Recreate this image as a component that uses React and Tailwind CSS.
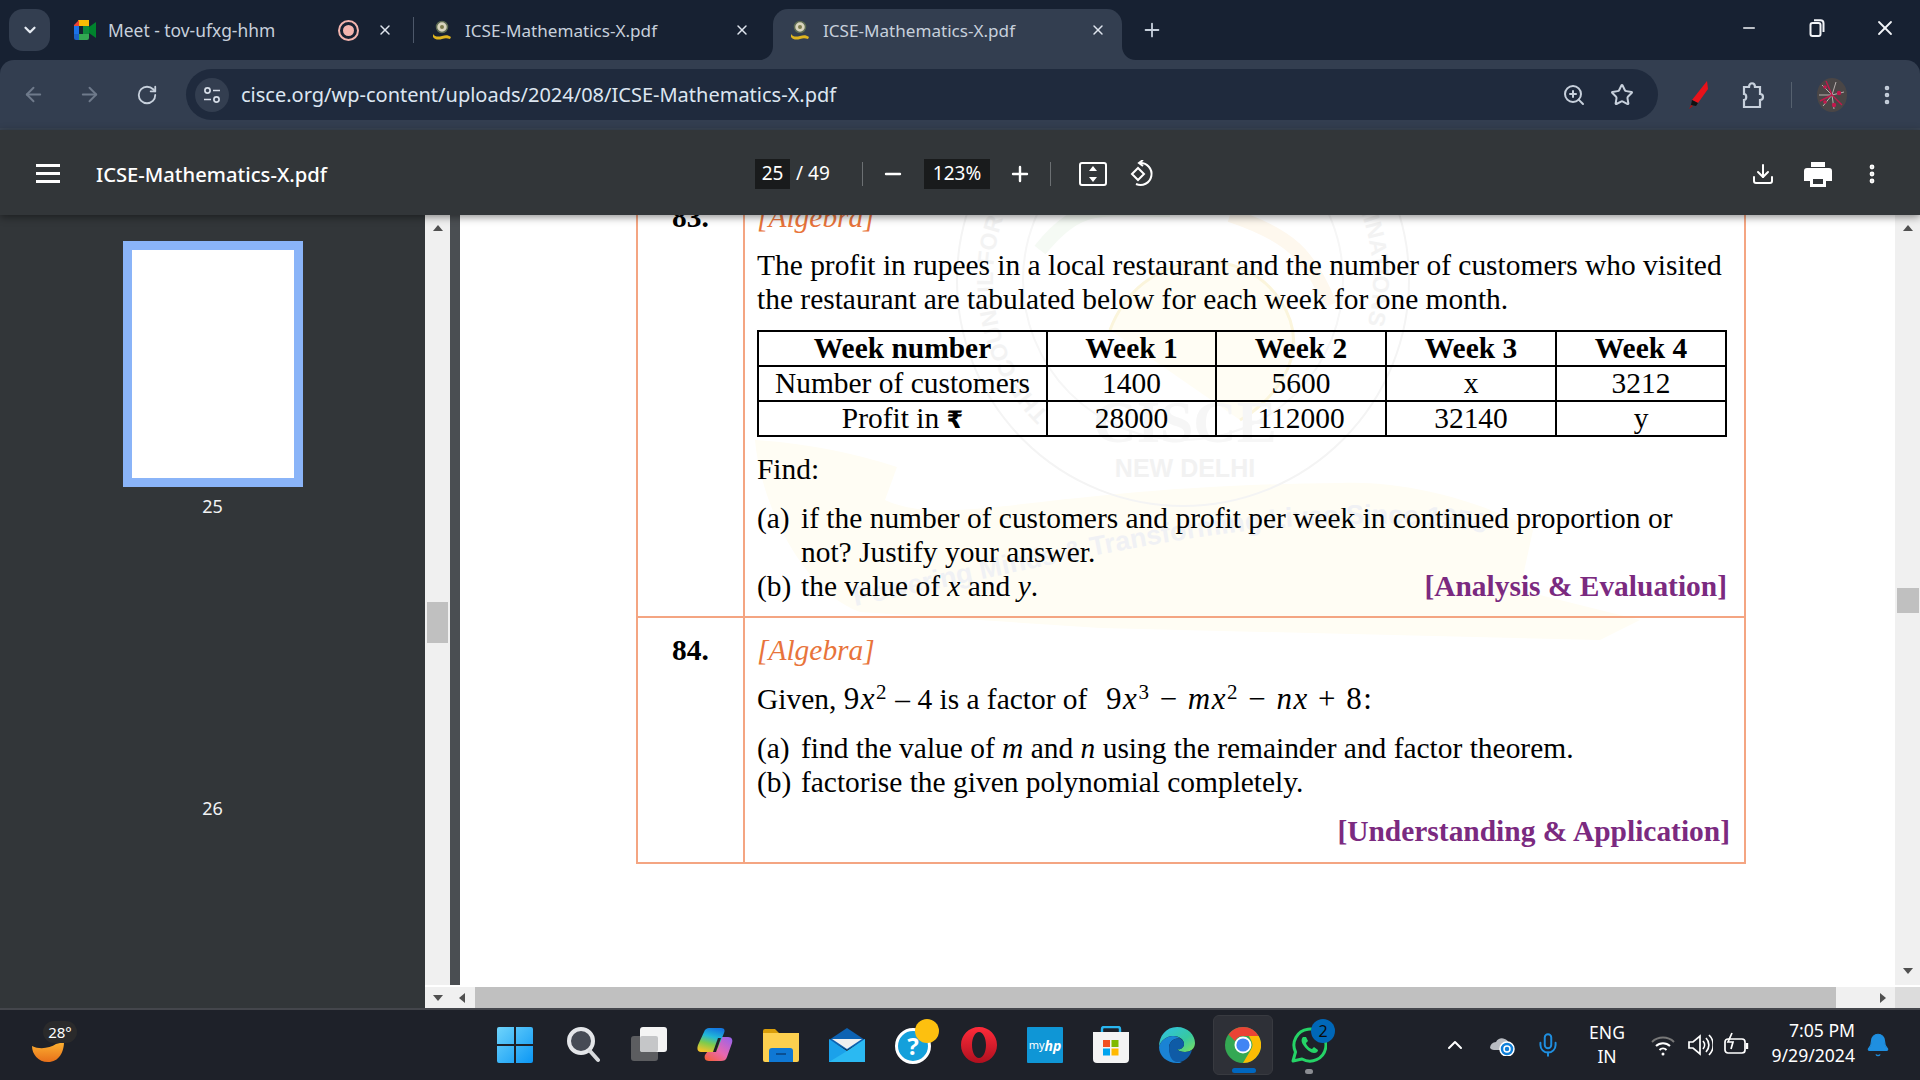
import React from "react";
import { ArrowLeft, ArrowRight, RotateCw, ZoomIn, Star, X, Plus, Minus, ChevronDown, ChevronUp, MoreVertical, Download, Mic, Bell } from "lucide-react";

const ui = "font-['Noto_Sans',sans-serif]";
const serif = "font-['Liberation_Serif',serif]";

function CisceIcon() {
  return (
    <svg width="22" height="22" viewBox="0 0 22 22" className="shrink-0">
      <circle cx="11" cy="8" r="5.5" fill="#d9d4bd" stroke="#5c6a52" strokeWidth="1.5" />
      <circle cx="11" cy="8" r="2" fill="#7b7a4c" />
      <path d="M2 15c2 3 5 3 9 2s6-1 9 1l-1 2c-3-1-5-1-8 0s-7 1-9-2z" fill="#e0b41e" />
    </svg>
  );
}

function MeetIcon() {
  return (
    <svg width="24" height="22" viewBox="0 0 24 22" className="shrink-0">
      <path d="M5 1h11v6H6v0z" fill="#fbbc04" />
      <path d="M1 6l5-5v6H1z" fill="#ea4335" />
      <path d="M1 7h5v8H1z" fill="#1a73e8" />
      <path d="M1 15h5v6H3a2 2 0 01-2-2z" fill="#1a63c8" />
      <path d="M6 15h10v4a2 2 0 01-2 2H6z" fill="#34a853" />
      <path d="M10 7h6v8h-6z" fill="#0f8a3c" />
      <path d="M16 8l7-5v16l-7-5z" fill="#00832d" />
    </svg>
  );
}

function Tab({ className, icon, title, extra, titleClass }) {
  return (
    <div className={`h-full flex items-center shrink-0 ${className}`}>
      {icon}
      <span className={`text-[#c7d0dc] whitespace-nowrap mt-[1px] ${titleClass || "ml-[12px] text-[17.1px]"} ${ui}`}>{title}</span>
      <div className="ml-auto flex items-center">
        {extra}
        <X size={16} strokeWidth={2.2} className="text-[#dfe5ee]" />
      </div>
    </div>
  );
}

function TabStrip() {
  return (
    <div className="h-[60px] shrink-0 bg-[#172132] flex pt-[9px] relative">
      <div className="ml-[9px] mr-[10px] w-[41px] h-[42px] rounded-[14px] bg-[#333e50] flex items-center justify-center">
        <ChevronDown size={18} strokeWidth={3} className="text-[#e6ebf2]" />
      </div>
      <Tab
        className="w-[353px] pl-[13px] pr-[20px] pb-[9px] h-[51px]"
        icon={<MeetIcon />}
        title="Meet - tov-ufxg-hhm"
        titleClass="ml-[11px] text-[17.4px]"
        extra={
          <span className="mr-[18px] w-[21px] h-[21px] rounded-full border-2 border-[#f3b4ae] flex items-center justify-center">
            <span className="w-[11px] h-[11px] rounded-full bg-[#f3b4ae]" />
          </span>
        }
      />
      <div className="w-px h-[26px] mt-[8px] bg-[#4d586a]" />
      <Tab
        className="w-[359px] pl-[17px] pr-[23px] pb-[9px]"
        icon={<CisceIcon />}
        title="ICSE-Mathematics-X.pdf"
      />
      <div className="relative w-[349px] h-[51px] shrink-0 bg-[#333e50] rounded-t-[15px] pb-[9px] pl-[16px] pr-[16px]">
        <Tab className="w-full" icon={<CisceIcon />} title="ICSE-Mathematics-X.pdf" />
        <svg width="14" height="14" viewBox="0 0 14 14" className="absolute bottom-0 -left-[14px]">
          <path d="M14 0v14H0C8 14 14 8 14 0z" fill="#333e50" />
        </svg>
        <svg width="14" height="14" viewBox="0 0 14 14" className="absolute bottom-0 -right-[14px]">
          <path d="M0 0v14h14C6 14 0 8 0 0z" fill="#333e50" />
        </svg>
      </div>
      <div className="ml-[19px] h-[42px] flex items-center">
        <Plus size={22} strokeWidth={2} className="text-[#c7d0dc]" />
      </div>
      <div className="ml-auto flex h-[42px] -mt-[2px] pr-[1px] text-[#f2f4f8]">
        <div className="w-[68px] flex items-center justify-center">
          <Minus size={18} strokeWidth={2} />
        </div>
        <div className="w-[68px] flex items-center justify-center">
          <svg width="16" height="18" viewBox="0 0 16 18" fill="none" stroke="currentColor" strokeWidth="2">
            <rect x="1.5" y="4" width="10" height="13" rx="2" />
            <path d="M5 1.2h6.5a3 3 0 013 3V13" />
          </svg>
        </div>
        <div className="w-[68px] flex items-center justify-center">
          <X size={24} strokeWidth={1.8} />
        </div>
      </div>
    </div>
  );
}

function ToolBar() {
  return (
    <div className="h-[70px] shrink-0 bg-[#172132]">
      <div className="h-full bg-[#333e50] rounded-t-[14px] border-b-2 border-[#3a4554] flex items-start pt-[9px]">
        <div className="w-[186px] h-[51px] shrink-0 flex items-center">
          <ArrowLeft size={23} strokeWidth={2} className="ml-[22px] text-[#6f7a8b]" />
          <ArrowRight size={23} strokeWidth={2} className="ml-[33px] text-[#6f7a8b]" />
          <RotateCw size={22} strokeWidth={2} className="ml-[35px] text-[#c7d0dc]" />
        </div>
        <div className="w-[1472px] h-[51px] shrink-0 rounded-full bg-[#1f2a3d] flex items-center pl-[9px] pr-[24px]">
          <div className="w-[34px] h-[34px] rounded-full bg-[#333e50] flex items-center justify-center">
            <svg width="20" height="20" viewBox="0 0 20 20" fill="none" stroke="#d5dce6" strokeWidth="1.7">
              <circle cx="5.5" cy="5.5" r="2.6" />
              <path d="M11 5.5h7M2 14.5h7" />
              <circle cx="14.5" cy="14.5" r="2.6" />
            </svg>
          </div>
          <span className={`ml-[12px] text-[#dde6f1] text-[20px] whitespace-nowrap ${ui}`}>cisce.org/wp-content/uploads/2024/08/ICSE-Mathematics-X.pdf</span>
          <div className="ml-auto flex items-center gap-[24px] text-[#c7d0dc]">
            <ZoomIn size={24} strokeWidth={2} />
            <Star size={24} strokeWidth={2} />
          </div>
        </div>
        <div className="flex items-center h-[51px]">
          <svg width="20" height="28" viewBox="0 0 20 28" className="ml-[30px]">
            <path d="M19 0l1 8-10 14-6-3z" fill="#e8121a" />
            <path d="M4 19l6 3-2 3-5-1z" fill="#111" />
            <path d="M3 24l2 1-4 3z" fill="#a11" />
          </svg>
          <svg width="24" height="28" viewBox="0 0 24 28" fill="none" stroke="#c7d0dc" strokeWidth="2.2" className="ml-[33px]">
            <path d="M3 6h5c0-5 6-5 6 0h5v7c4 0 4 6 0 6v7H3v-7c3 0 3-6 0-6z" />
          </svg>
          <div className="ml-[26px] w-px h-[26px] bg-[#56616f]" />
          <svg width="30" height="34" viewBox="0 0 30 34" className="ml-[25px]">
            <ellipse cx="15" cy="17" rx="15" ry="17" fill="#4a4646" />
            <path d="M15 17L5 7M15 17L2 17M15 17L6 28M15 17l12-3M15 17l2 14M15 17l4-13" stroke="#b8b0ae" strokeWidth="1" />
            <path d="M15 17L9 3M15 17L3 23M15 17l10 10" stroke="#c2184c" strokeWidth="1.4" />
            <circle cx="8" cy="9" r="1.8" fill="#c2184c" />
            <circle cx="22" cy="15" r="2.2" fill="#c2184c" />
            <circle cx="17" cy="27" r="2.2" fill="#c2184c" />
            <circle cx="8" cy="24" r="1.8" fill="#c2184c" />
          </svg>
          <MoreVertical size={24} strokeWidth={2.6} className="ml-[28px] text-[#c7d0dc]" />
        </div>
      </div>
    </div>
  );
}

function PdfToolBar() {
  return (
    <div className={`relative z-20 h-[85px] shrink-0 bg-[#323639] flex items-center pt-[2px] text-white shadow-[0_2px_8px_rgba(0,0,0,0.45)] ${ui}`}>
      <svg width="24" height="19" viewBox="0 0 24 19" fill="white" className="ml-[36px] shrink-0">
        <rect y="0" width="24" height="3" />
        <rect y="8" width="24" height="3" />
        <rect y="16" width="24" height="3" />
      </svg>
      <span className="ml-[36px] mt-[1px] w-[659px] text-[20.2px] font-medium whitespace-nowrap">ICSE-Mathematics-X.pdf</span>
      <span className="w-[35px] h-[30px] bg-[#191b1c] flex items-center justify-center text-[19px]">25</span>
      <span className="ml-[6px] w-[40px] text-[19px] whitespace-nowrap">/ 49</span>
      <div className="ml-[26px] w-px h-[24px] bg-[#6c7073]" />
      <Minus size={24} strokeWidth={2.4} className="ml-[18px]" />
      <span className="ml-[19px] w-[66px] h-[30px] bg-[#191b1c] flex items-center justify-center text-[19px]">123%</span>
      <Plus size={24} strokeWidth={2.4} className="ml-[18px]" />
      <div className="ml-[18px] w-px h-[24px] bg-[#6c7073]" />
      <svg width="28" height="24" viewBox="0 0 28 24" fill="none" stroke="white" strokeWidth="2" className="ml-[28px]">
        <rect x="1" y="1" width="26" height="22" rx="2" />
        <path d="M14 4l4 5h-8zM14 20l4-5h-8z" fill="white" stroke="none" />
      </svg>
      <svg width="28" height="28" viewBox="0 0 28 28" fill="none" stroke="white" strokeWidth="2" className="ml-[19px]">
        <path d="M9 14l6-6 6 6-6 6z" transform="translate(-3 0)" />
        <path d="M14 3a11 11 0 11-4 21" />
        <path d="M17 0l-4 3 4 3" />
      </svg>
      <div className="ml-auto flex items-center pr-[36px]">
        <Download size={24} strokeWidth={2} />
        <svg width="28" height="26" viewBox="0 0 28 26" className="ml-[29px]">
          <path d="M7 1h14v5H7z" fill="white" />
          <path d="M3 7h22a3 3 0 013 3v10h-6v-5H6v5H0V10a3 3 0 013-3z" fill="white" />
          <path d="M6 15h16v11H6z" fill="white" />
          <path d="M9 18h10v5H9z" fill="#323639" />
        </svg>
        <MoreVertical size={24} strokeWidth={2.8} className="ml-[28px]" />
      </div>
    </div>
  );
}

function Triangle({ dir, className }) {
  const d = { up: "M1 8l5-6 5 6z", down: "M1 3l5 6 5-6z", left: "M8 1L2 6l6 5z", right: "M4 1l6 5-6 5z" }[dir];
  return (
    <svg width="12" height="12" viewBox="0 0 12 12" className={className}>
      <path d={d} fill="#505050" />
    </svg>
  );
}

function Sidebar() {
  return (
    <div className={`w-[425px] shrink-0 bg-[#323639] flex flex-col items-center text-[#f1f3f4] text-[18px] ${ui}`}>
      <div className="mt-[26px] w-[180px] h-[246px] shrink-0 border-[9px] border-[#8ab4f8] bg-white" />
      <span className="mt-[7px] leading-[24px]">25</span>
      <span className="mt-[278px] leading-[24px]">26</span>
    </div>
  );
}

function Watermark() {
  return (
    <svg viewBox="460 215 1435 770" width="1435" height="770" className="absolute inset-0 pointer-events-none">
      <defs>
        <path id="wmRim" d="M1049 414a190 190 0 11268 0" />
        <path id="wmBand" d="M855 606C1050 566 1200 526 1350 524S1500 540 1540 562" />
      </defs>
      <path d="M755 440Q830 445 897 467L885 500C950 530 1050 485 1341 483 1420 480 1500 510 1533 530L1520 590 1640 620 1600 640 1100 628 860 612C800 590 760 500 755 440z" fill="#fffdf4" />
      <circle cx="1183" cy="280" r="226" fill="none" stroke="#f4f4f4" strokeWidth="2" />
      <circle cx="1183" cy="280" r="160" fill="none" stroke="#f6f6f6" strokeWidth="2" />
      <path d="M1040 250c40-50 60-40 130-40" fill="none" stroke="#f5faf4" strokeWidth="14" />
      <path d="M1230 215c60 20 80 40 100 90" fill="none" stroke="#fef8ee" strokeWidth="14" />
      <path d="M1110 330c30-80 130-90 170-30s-20 110-40 120" fill="#fffdf4" stroke="#fbf5dc" strokeWidth="3" />
      <text fontFamily="Liberation Sans" fontWeight="700" fontSize="23" fill="#f3f3f3">
        <textPath href="#wmRim">THE COUNCIL FOR THE INDIAN SCHOOL CERTIFICATE EXAMINATIONS</textPath>
      </text>
      <text x="1185" y="442" textAnchor="middle" fontFamily="Liberation Serif" fontWeight="700" fontSize="60" fill="#f6f6f6">CISCE</text>
      <text x="1185" y="477" textAnchor="middle" fontFamily="Liberation Sans" fontWeight="700" fontSize="25" fill="#f2f2f2">NEW DELHI</text>
      <text fontFamily="Liberation Sans" fontWeight="700" fontSize="27" fill="#f0f1f4">
        <textPath href="#wmBand">Powering Minds &amp; Transforming Lives Since 1958</textPath>
      </text>
    </svg>
  );
}

function Row83() {
  return (
    <div className="flex h-[443px] border-b-2 border-[#f4a582]">
      <div className="w-[107px] shrink-0 border-r-2 border-[#f4a582] text-center font-bold pt-[25px]">83.</div>
      <div className="flex-1 pl-[12px] pr-[33px] pt-[25px]">
        <p className="italic text-[#e8743b]">[Algebra]</p>
        <p className="mt-[14px] whitespace-nowrap">
          The profit in rupees in a local restaurant and the number of customers who visited<br />
          the restaurant are tabulated below for each week for one month.
        </p>
        <table className="mt-[14px] w-[968px] table-fixed border-collapse border-2 border-black text-center leading-[31px]">
          <colgroup>
            <col className="w-[289px]" />
            <col className="w-[169px]" />
            <col className="w-[170px]" />
            <col className="w-[170px]" />
            <col className="w-[170px]" />
          </colgroup>
          <tbody>
            <tr className="font-bold h-[35px]">
              {["Week number", "Week 1", "Week 2", "Week 3", "Week 4"].map((c) => (
                <td key={c} className="border-2 border-black p-0">{c}</td>
              ))}
            </tr>
            <tr className="h-[35px]">
              {["Number of customers", "1400", "5600", "x", "3212"].map((c) => (
                <td key={c} className="border-2 border-black p-0">{c}</td>
              ))}
            </tr>
            <tr className="h-[35px]">
              <td className="border-2 border-black p-0">Profit in <b className="font-['DejaVu_Sans',serif] text-[24px] leading-none">₹</b></td>
              {["28000", "112000", "32140", "y"].map((c) => (
                <td key={c} className="border-2 border-black p-0">{c}</td>
              ))}
            </tr>
          </tbody>
        </table>
        <p className="mt-[15px]">Find:</p>
        <div className="mt-[15px] flex">
          <span className="w-[44px] shrink-0">(a)</span>
          <p className="whitespace-nowrap">
            if the number of customers and profit per week in continued proportion or<br />
            not? Justify your answer.
          </p>
        </div>
        <div className="flex">
          <span className="w-[44px] shrink-0">(b)</span>
          <p>the value of <i>x</i> and <i>y</i>.</p>
          <b className="ml-auto text-[#7b2a80]">[Analysis &amp; Evaluation]</b>
        </div>
      </div>
    </div>
  );
}

function Row84() {
  const sup = "text-[21px] leading-none";
  return (
    <div className="flex h-[246px] border-b-2 border-[#f4a582]">
      <div className="w-[107px] shrink-0 border-r-2 border-[#f4a582] text-center font-bold pt-[15px]">84.</div>
      <div className="flex-1 pl-[12px] pr-[14px] pt-[15px]">
        <p className="italic text-[#e8743b]">[Algebra]</p>
        <p className="mt-[15px] whitespace-nowrap">
          Given, <span className="text-[31px] tracking-[1.5px]">9<i>x</i><sup className={sup}>2</sup></span> – 4 is a factor of&nbsp;{" "}
          <span className="ml-[4px] text-[31px] tracking-[1.5px]">
            9<i>x</i><sup className={sup}>3</sup> − <i>mx</i><sup className={sup}>2</sup> − <i>nx</i> + 8:
          </span>
        </p>
        <div className="mt-[15px] flex">
          <span className="w-[44px] shrink-0">(a)</span>
          <p>find the value of <i>m</i> and <i>n</i> using the remainder and factor theorem.</p>
        </div>
        <div className="flex">
          <span className="w-[44px] shrink-0">(b)</span>
          <p>factorise the given polynomial completely.</p>
        </div>
        <p className="mt-[15px] text-right font-bold text-[#7b2a80]">[Understanding &amp; Application]</p>
      </div>
    </div>
  );
}

function Viewer() {
  return (
    <div className="flex-1 flex flex-col min-w-0">
      <div className="flex-1 flex min-h-0">
        <div className="w-[25px] shrink-0 bg-[#f0f0f0] flex flex-col items-center pt-[8px]">
          <Triangle dir="up" />
          <div className="w-[21px] h-[41px] bg-[#c0c0c0] mt-[367px]" />
        </div>
        <div className="w-[10px] shrink-0 bg-[#4a4e52]" />
        <div className="flex-1 bg-white relative overflow-hidden">
          <Watermark />
          <div className={`relative ml-[176px] w-[1110px] -mt-[40px] border-l-2 border-r-2 border-[#f4a582] text-black text-[29.45px] leading-[34px] ${serif}`}>
            <Row83 />
            <Row84 />
          </div>
        </div>
        <div className="w-[25px] shrink-0 bg-[#f0f0f0] flex flex-col items-center pt-[8px]">
          <Triangle dir="up" />
          <div className="w-[22px] h-[25px] bg-[#c0c0c0] mt-[353px]" />
          <Triangle dir="down" className="mt-auto mb-[8px]" />
        </div>
      </div>
      <div className="h-[23px] shrink-0 border-t-2 border-white bg-[#f0f0f0] flex items-center">
        <div className="w-[25px] flex justify-center"><Triangle dir="down" /></div>
        <div className="w-[25px] flex justify-center"><Triangle dir="left" /></div>
        <div className="w-[1361px] h-full bg-[#c0c0c0]" />
        <div className="ml-[40px] w-[12px]"><Triangle dir="right" /></div>
        <div className="ml-auto w-[25px] h-full bg-[#dcdcdc]" />
      </div>
    </div>
  );
}

function WinIcon() {
  return (
    <svg width="36" height="36" viewBox="0 0 36 36" className="mr-[4px]">
      <defs>
        <linearGradient id="win" x1="0" y1="0" x2="1" y2="1">
          <stop offset="0" stopColor="#6fd4fb" />
          <stop offset="1" stopColor="#0b97f5" />
        </linearGradient>
      </defs>
      <path d="M0 2a2 2 0 012-2h15v17H0zM19 0h15a2 2 0 012 2v15H19zM0 19h17v17H2a2 2 0 01-2-2zM19 19h17v15a2 2 0 01-2 2H19z" fill="url(#win)" />
    </svg>
  );
}

function SearchIcon() {
  return (
    <svg width="34" height="36" viewBox="0 0 34 36">
      <circle cx="15" cy="14" r="12" fill="#464b55" stroke="#e4e6e9" strokeWidth="4" />
      <path d="M24 24l8 9" stroke="#d8dadd" strokeWidth="4" strokeLinecap="round" />
    </svg>
  );
}

function TaskViewIcon() {
  return (
    <svg width="36" height="36" viewBox="0 0 36 36">
      <rect x="0" y="9" width="27" height="25" rx="3" fill="#5c5d60" />
      <rect x="9" y="0" width="27" height="25" rx="3" fill="#f4f4f4" />
      <rect x="9" y="9" width="18" height="16" rx="2" fill="#c5c6c8" />
    </svg>
  );
}

function CopilotIcon() {
  return (
    <svg width="36" height="34" viewBox="0 0 36 34">
      <defs>
        <linearGradient id="cp1" x1="0.6" y1="0" x2="0.3" y2="1">
          <stop offset="0" stopColor="#1478e0" />
          <stop offset="0.35" stopColor="#22b8d8" />
          <stop offset="0.65" stopColor="#7ecb4c" />
          <stop offset="1" stopColor="#f5c22b" />
        </linearGradient>
        <linearGradient id="cp2" x1="0.9" y1="0" x2="0.1" y2="1">
          <stop offset="0" stopColor="#9a63ea" />
          <stop offset="0.55" stopColor="#e868b0" />
          <stop offset="1" stopColor="#f5603a" />
        </linearGradient>
      </defs>
      <path d="M21 9h10c4 0 5 3 4 6l-5 14c-1 3-3 4-6 4H12c-4 0-5-3-4-6z" fill="url(#cp2)" />
      <path d="M12 0h12c4 0 4 3 3 5l-6 15c-1 3-3 4-6 4H4c-4 0-4-4-3-7L7 4c1-3 3-4 5-4z" fill="url(#cp1)" />
      <path d="M21 10l-5 14 3 0 5-14z" fill="#1e2129" />
    </svg>
  );
}

function FolderIcon() {
  return (
    <svg width="36" height="33" viewBox="0 0 36 33">
      <path d="M0 2a2 2 0 012-2h10l4 4h-16z" fill="#d99e0a" />
      <path d="M0 4h36v27a2 2 0 01-2 2H2a2 2 0 01-2-2z" fill="#fdd04f" />
      <path d="M6 33v-11a3 3 0 013-3h18a3 3 0 013 3v11z" fill="#0f78d4" />
      <path d="M13 25h10" stroke="#0a4f93" strokeWidth="2" />
    </svg>
  );
}

function MailIcon() {
  return (
    <svg width="36" height="34" viewBox="0 0 36 34">
      <path d="M0 12L18 0l18 12-18 10z" fill="#0c62b3" />
      <path d="M3 11h30l-15 10z" fill="#efefef" />
      <path d="M0 11l18 12 18-12v23H0z" fill="#1ba1ea" />
      <path d="M0 34l18-11 18-12v23z" fill="#32c3f5" opacity="0.7" />
    </svg>
  );
}

function HelpIcon() {
  return (
    <div className="relative w-[36px] h-[36px]">
      <div className={`absolute left-0 top-[1px] w-[36px] h-[36px] rounded-full bg-[#14a0db] border-[3px] border-white flex items-center justify-center text-white font-bold text-[24px] leading-none ${ui}`}>?</div>
      <div className="absolute -top-[8px] left-[20px] w-[24px] h-[24px] rounded-full bg-[#fdc00f]" />
    </div>
  );
}

function OperaIcon() {
  return (
    <svg width="36" height="36" viewBox="0 0 36 36">
      <defs>
        <linearGradient id="op" x1="0" y1="0" x2="0" y2="1">
          <stop offset="0" stopColor="#ff2b3a" />
          <stop offset="1" stopColor="#b0101f" />
        </linearGradient>
      </defs>
      <path fillRule="evenodd" d="M18 0c10 0 18 8 18 18s-8 18-18 18S0 28 0 18 8 0 18 0zm0 5c-4 0-7 6-7 13s3 13 7 13 7-6 7-13-3-13-7-13z" fill="url(#op)" />
    </svg>
  );
}

function HpIcon() {
  return (
    <div className={`w-[36px] h-[36px] bg-[#0f96d6] rounded-[1px] flex items-center justify-center text-white text-[11px] italic ${ui}`}>
      <span className="not-italic">my</span><span className="font-bold text-[14px]">hp</span>
    </div>
  );
}

function StoreIcon() {
  return (
    <svg width="36" height="38" viewBox="0 0 36 38">
      <path d="M9 9V3a2 2 0 012-2h14a2 2 0 012 2v6" fill="none" stroke="#29b6f0" strokeWidth="2.4" />
      <path d="M0 6h36v27a4 4 0 01-4 4H4a4 4 0 01-4-4z" fill="#f4f4f4" />
      <rect x="10" y="14" width="7" height="7" fill="#f25022" />
      <rect x="18.5" y="14" width="7" height="7" fill="#7fba00" />
      <rect x="10" y="22.5" width="7" height="7" fill="#00a4ef" />
      <rect x="18.5" y="22.5" width="7" height="7" fill="#ffb900" />
    </svg>
  );
}

function EdgeIcon() {
  return (
    <svg width="36" height="36" viewBox="0 0 36 36">
      <defs>
        <linearGradient id="ed" x1="0" y1="0" x2="1" y2="1">
          <stop offset="0" stopColor="#2fc0e8" />
          <stop offset="0.6" stopColor="#37c9a0" />
          <stop offset="1" stopColor="#7fe05a" />
        </linearGradient>
      </defs>
      <path d="M18 0c11 0 18 8 18 16 0 6-5 9-10 9-4 0-7-1-8-3 3 1 7-1 7-5 0-5-5-8-11-8C8 9 2 13 0 20 0 9 7 0 18 0z" fill="url(#ed)" />
      <path d="M0 20c2-7 8-11 14-11 3 0 6 1 8 3-7-2-12 3-12 9 0 7 5 12 13 14-2 1-3 1-5 1C8 36 0 29 0 20z" fill="#1a83d4" />
      <path d="M10 21c0-6 5-11 12-9 2 1 3 3 3 5 0 4-4 6-7 5 1 2 4 3 8 3 3 0 5-1 7-2-2 7-8 13-16 12-6-2-7-9-7-14z" fill="#0f5ba6" />
    </svg>
  );
}

function ChromeIcon() {
  return (
    <svg width="36" height="36" viewBox="0 0 36 36">
      <circle cx="18" cy="18" r="18" fill="#34a853" />
      <path d="M18 0a18 18 0 0115.6 9H18a9 9 0 00-8 5L3.5 7.5A18 18 0 0118 0z" fill="#ea4335" />
      <path d="M33.6 9A18 18 0 0118 36l8-13.5A9 9 0 0026 13l-2-4z" fill="#fbbc04" />
      <circle cx="18" cy="18" r="8.5" fill="white" />
      <circle cx="18" cy="18" r="6.6" fill="#4285f4" />
    </svg>
  );
}

function WhatsappIcon() {
  return (
    <div className="relative w-[36px] h-[36px]">
      <svg width="36" height="36" viewBox="0 0 36 36" fill="none">
        <path d="M2 34l2.5-9A16 16 0 1111 32z" stroke="#25d366" strokeWidth="3" strokeLinejoin="round" />
        <path d="M12 10c-2 2-2 5 1 9s7 7 10 7 4-2 4-3l-4-3-2 2c-2 0-6-4-6-6l2-2-2-4z" fill="#25d366" />
      </svg>
      <div className={`absolute -top-[8px] left-[20px] w-[24px] h-[24px] rounded-full bg-[#0067b8] flex items-center justify-center text-[#0b0b0b] text-[16px] leading-none ${ui}`}>2</div>
    </div>
  );
}

function TaskIcon({ children, active, dot }) {
  return (
    <div className="w-[66px] h-[60px] flex items-center justify-center">
      <div className={`relative w-[60px] h-[60px] flex items-center justify-center rounded-[6px] ${active ? "bg-[#2e3037] border border-[#383a40]" : ""}`}>
        {children}
        {active && <span className="absolute bottom-[1px] left-[18px] w-[24px] h-[5px] rounded-full bg-[#0067c0]" />}
        {dot && <span className="absolute bottom-[1px] left-[26px] w-[8px] h-[5px] rounded-full bg-[#8b8d92]" />}
      </div>
    </div>
  );
}

function Taskbar() {
  return (
    <div className={`h-[72px] shrink-0 bg-[#1e2129] border-t-2 border-[#44464c] flex items-center text-white ${ui}`}>
      <div className="w-[484px] shrink-0 h-full relative">
        <svg width="32" height="20" viewBox="0 0 32 20" className="absolute left-[32px] top-[32px]">
          <defs>
            <linearGradient id="moon" x1="0" y1="0" x2="0" y2="1">
              <stop offset="0" stopColor="#fdb332" />
              <stop offset="1" stopColor="#e8701a" />
            </linearGradient>
          </defs>
          <path d="M0 4c8 4 18 2 24-2l8-2c0 10-5 20-16 20C6 20 0 12 0 4z" fill="url(#moon)" />
        </svg>
        <div className="absolute left-[43px] top-[11px] w-[34px] h-[22px] rounded-full bg-[#2a2a2b] flex items-center justify-center text-[15px]">28°</div>
      </div>
      <div className="flex items-center shrink-0">
        <TaskIcon><WinIcon /></TaskIcon>
        <TaskIcon><SearchIcon /></TaskIcon>
        <TaskIcon><TaskViewIcon /></TaskIcon>
        <TaskIcon><CopilotIcon /></TaskIcon>
        <TaskIcon><FolderIcon /></TaskIcon>
        <TaskIcon><MailIcon /></TaskIcon>
        <TaskIcon><HelpIcon /></TaskIcon>
        <TaskIcon><OperaIcon /></TaskIcon>
        <TaskIcon><HpIcon /></TaskIcon>
        <TaskIcon><StoreIcon /></TaskIcon>
        <TaskIcon><EdgeIcon /></TaskIcon>
        <TaskIcon active><ChromeIcon /></TaskIcon>
        <TaskIcon dot><WhatsappIcon /></TaskIcon>
      </div>
      <div className="ml-auto flex items-center h-full">
        <div className="w-[48px] flex justify-center"><ChevronUp size={24} strokeWidth={2} /></div>
        <div className="w-[46px] flex justify-center">
          <svg width="26" height="22" viewBox="0 0 26 22">
            <path d="M1 14a6 6 0 016-6 7 7 0 0113 2v6H6a5 5 0 01-5-2z" fill="#b9bcc2" />
            <circle cx="18" cy="15" r="7" fill="#0f7fd8" stroke="#fff" strokeWidth="1.5" />
            <circle cx="18" cy="15" r="3" fill="none" stroke="#fff" strokeWidth="1.5" />
          </svg>
        </div>
        <div className="w-[46px] flex justify-center"><Mic size={26} strokeWidth={1.8} className="text-[#1f8fe0]" /></div>
        <div className="w-[72px] -mt-[3px] text-center text-[17.5px] leading-[24px]">
          <div>ENG</div>
          <div>IN</div>
        </div>
        <div className="w-[40px] flex justify-center">
          <svg width="26" height="24" viewBox="0 0 26 24" fill="none" stroke="white" strokeWidth="2">
            <path d="M2 9a16 16 0 0122 0" stroke="#777" />
            <path d="M6 13a10 10 0 0114 0M9.5 17a5 5 0 017 0" />
            <circle cx="13" cy="21" r="1.5" fill="white" stroke="none" />
          </svg>
        </div>
        <div className="w-[34px] flex justify-center">
          <svg width="26" height="26" viewBox="0 0 26 26" fill="none" stroke="white" strokeWidth="1.7">
            <path d="M2 10v6h4l7 6V4l-7 6z" />
            <path d="M16 9a6 6 0 010 8M19 6a10 10 0 010 14M22 3a14 14 0 010 20" />
          </svg>
        </div>
        <div className="w-[38px] flex justify-center">
          <svg width="26" height="26" viewBox="0 0 26 26" fill="none" stroke="white" strokeWidth="1.7">
            <rect x="2" y="7" width="20" height="14" rx="3" />
            <path d="M24 11v6" strokeWidth="2.4" />
            <path d="M9 1L5 10h5l-2 7" />
          </svg>
        </div>
        <div className="w-[100px] -mt-[5px] text-right text-[17.6px] leading-[25px]">
          <div>7:05 PM</div>
          <div>9/29/2024</div>
        </div>
        <div className="w-[46px] mr-[19px] flex justify-center"><Bell size={26} fill="#1f8fe0" strokeWidth={1} className="text-[#1f8fe0]" /></div>
      </div>
    </div>
  );
}

export default function App() {
  return (
    <div className="w-[1920px] h-[1080px] flex flex-col overflow-hidden bg-[#1e2129]">
      <TabStrip />
      <ToolBar />
      <PdfToolBar />
      <div className="flex-1 flex min-h-0">
        <Sidebar />
        <Viewer />
      </div>
      <Taskbar />
    </div>
  );
}
